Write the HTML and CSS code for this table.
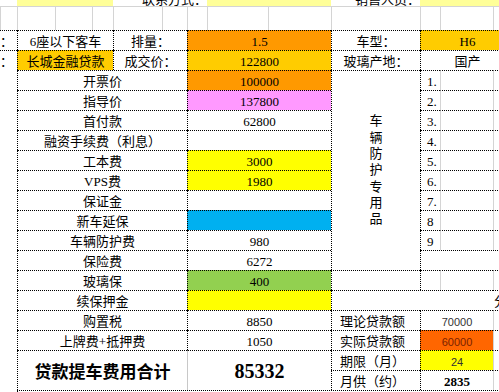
FILE: index.html
```html
<!DOCTYPE html>
<html lang="zh-CN">
<head>
<meta charset="utf-8">
<title>贷款提车费用</title>
<link rel="stylesheet" href="styles.css">
</head>
<body>
<div class="sheet">
  <!-- row 1 -->
  <div class="t"></div>
  <div class="t s3 ly"></div>
  <div class="t s3"><span>联系方式：</span></div>
  <div class="t s2 ly"></div>
  <div class="t"><span>销售人员：</span></div>
  <div class="t s3 ly"></div>
  <!-- row 2 -->
  <div class="g"></div><div class="g"></div><div class="g"></div><div class="g"></div>
  <div class="g"></div><div class="g"></div><div class="g"></div><div class="g"></div>
  <div class="g"></div><div class="g"></div><div class="g"></div><div class="g"></div>
  <div class="g"></div>
  <!-- row 3 -->
  <div class="c nl lft">：</div>
  <div class="c s3">6座以下客车</div>
  <div class="c s2">排量：</div>
  <div class="c s3 or">1.5</div>
  <div class="c">车型：</div>
  <div class="c s3 am">H6</div>
  <!-- row 4 -->
  <div class="c nl lft">：</div>
  <div class="c s3 am">长城金融贷款</div>
  <div class="c s2">成交价：</div>
  <div class="c s3 am">122800</div>
  <div class="c">玻璃产地：</div>
  <div class="c s3">国产</div>
  <!-- row 5 -->
  <div class="e"></div>
  <div class="c s5">开票价</div>
  <div class="c s3 or">100000</div>
  <div class="c rs10 vt"><span class="vtx">车辆防护专用品</span></div>
  <div class="c num">1.</div>
  <div class="c gl"></div>
  <div class="c gl"></div>
  <!-- row 6 -->
  <div class="e"></div>
  <div class="c s5">指导价</div>
  <div class="c s3 pk">137800</div>
  <div class="c num">2.</div>
  <div class="c gl"></div>
  <div class="c gl"></div>
  <!-- row 7 -->
  <div class="e"></div>
  <div class="c s5">首付款</div>
  <div class="c s3">62800</div>
  <div class="c num">3.</div>
  <div class="c gl"></div>
  <div class="c gl"></div>
  <!-- row 8 -->
  <div class="e"></div>
  <div class="c s5">融资手续费（利息）</div>
  <div class="c s3"></div>
  <div class="c num">4.</div>
  <div class="c gl"></div>
  <div class="c gl"></div>
  <!-- row 9 -->
  <div class="e"></div>
  <div class="c s5">工本费</div>
  <div class="c s3 yl">3000</div>
  <div class="c num">5.</div>
  <div class="c gl"></div>
  <div class="c gl"></div>
  <!-- row 10 -->
  <div class="e"></div>
  <div class="c s5">VPS费</div>
  <div class="c s3 yl">1980</div>
  <div class="c num">6.</div>
  <div class="c gl"></div>
  <div class="c gl"></div>
  <!-- row 11 -->
  <div class="e"></div>
  <div class="c s5">保证金</div>
  <div class="c s3"></div>
  <div class="c num">7.</div>
  <div class="c gl"></div>
  <div class="c gl"></div>
  <!-- row 12 -->
  <div class="e"></div>
  <div class="c s5">新车延保</div>
  <div class="c s3 bl"></div>
  <div class="c num">8</div>
  <div class="c gl"></div>
  <div class="c gl"></div>
  <!-- row 13 -->
  <div class="e"></div>
  <div class="c s5">车辆防护费</div>
  <div class="c s3">980</div>
  <div class="c num">9</div>
  <div class="c gl"></div>
  <div class="c gl"></div>
  <!-- row 14 -->
  <div class="e"></div>
  <div class="c s5">保险费</div>
  <div class="c s3">6272</div>
  <div class="c s3"></div>
  <!-- row 15 -->
  <div class="e"></div>
  <div class="c s5">玻璃保</div>
  <div class="c s3 gr">400</div>
  <div class="c"></div>
  <div class="c"></div>
  <div class="c gl"></div>
  <div class="c gl"></div>
  <!-- row 16 -->
  <div class="e"></div>
  <div class="c s5">续保押金</div>
  <div class="c s3 yl"></div>
  <div class="c s3"></div>
  <div class="c nl lft edge">分期</div>
  <!-- row 17 -->
  <div class="e"></div>
  <div class="c s5">购置税</div>
  <div class="c s3">8850</div>
  <div class="c lft rl">理论贷款额</div>
  <div class="c s2 sm">70000</div>
  <div class="c gl"></div>
  <!-- row 18 -->
  <div class="e"></div>
  <div class="c s5">上牌费+抵押费</div>
  <div class="c s3">1050</div>
  <div class="c lft rl">实际贷款额</div>
  <div class="c s2 sm rd">60000</div>
  <div class="c gl"></div>
  <!-- row 19 -->
  <div class="e"></div>
  <div class="c s5 rs2 tot">贷款提车费用合计</div>
  <div class="c s3 rs2 big gll">85332</div>
  <div class="c lft rl">期限（月）</div>
  <div class="c s2 sm yl">24</div>
  <div class="c gl"></div>
  <!-- row 20 -->
  <div class="e"></div>
  <div class="c lft rl">月供（约）</div>
  <div class="c s2 bd">2835</div>
  <div class="c gl"></div>
  <!-- row 21 -->
  <div class="e"></div>
  <div class="c s12"></div>
</div>
</body>
</html>
```

FILE: styles.css
```css
html, body {
  margin: 0;
  padding: 0;
  overflow: hidden;
  background: #fff;
}

body {
  font-family: "Liberation Serif", "Noto Sans CJK SC", serif;
  font-size: 13px;
  color: #000;
}

.sheet {
  display: grid;
  width: 514px;
  grid-template-columns: 17px 38px 37px 21px 49px 25px 20px 61px 63px 89px 20px 53px 21px;
  grid-template-rows: 6px 24px repeat(18, 20px) 2px;
}

.sheet > div {
  box-sizing: border-box;
  min-width: 0;
}

/* top band (row partly scrolled away) */
.t {
  display: flex;
  align-items: flex-end;
  justify-content: flex-end;
  overflow: hidden;
  line-height: 13px;
  white-space: nowrap;
}

/* light grid row */
.g {
  border-top: 1px solid #d4d4d4;
  border-left: 1px solid #d4d4d4;
}

/* regular cell */
.c {
  display: flex;
  align-items: flex-end;
  justify-content: center;
  border-top: 1px dotted #000;
  border-left: 1px dotted #000;
  white-space: nowrap;
  overflow: hidden;
  line-height: 16px;
}

.e {
  border: none;
}

.nl { border-left: none; }
.gl { border-left: 1px solid #d4d4d4; }
.gll { border-left: 1px solid #c8c8c8; }

.lft { justify-content: flex-start; }
.rl { padding-left: 8px; }
.num { justify-content: flex-start; padding-left: 6px; }
.edge { padding-left: 1px; overflow: visible; }

.s2 { grid-column: span 2; }
.s3 { grid-column: span 3; }
.s5 { grid-column: span 5; }
.s12 { grid-column: span 12; }
.rs2 { grid-row: span 2; }
.rs10 { grid-row: span 10; }

.vt { align-items: center; }
.vtx {
  display: block;
  width: 13px;
  white-space: normal;
  word-break: break-all;
  line-height: 16.3px;
}

.sm {
  font-family: "Liberation Sans", "Noto Sans CJK SC", sans-serif;
  font-size: 11px;
  color: #333;
}

.bd { font-weight: bold; }

.big {
  align-items: center;
  font-size: 20px;
  font-weight: bold;
}

.tot {
  align-items: center;
  font-family: "Noto Sans CJK SC", sans-serif;
  font-size: 17px;
  font-weight: bold;
}

/* fills */
.ly { background: #ffff99; }
.or { background: #ff9900; }
.am { background: #ffcc00; }
.pk { background: #ff99ff; }
.yl { background: #ffff00; }
.bl { background: #00b0f0; }
.gr { background: #92d050; }
.rd { background: #ff6600; color: #7a1f00; }
```
